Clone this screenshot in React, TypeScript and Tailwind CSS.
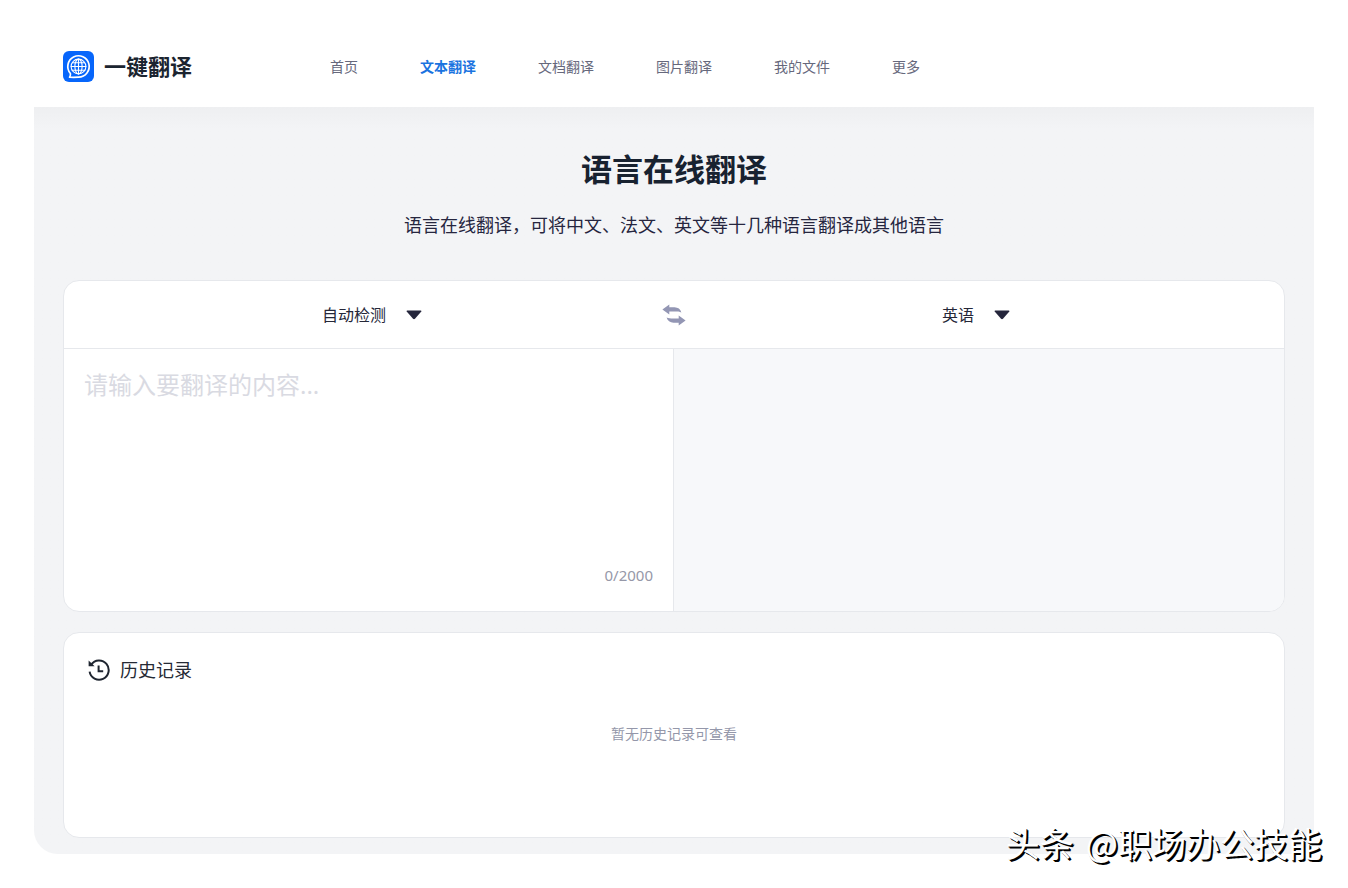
import React, { useState } from 'react';

const navItems = ['首页', '文本翻译', '文档翻译', '图片翻译', '我的文件', '更多'];
const languages = ['英语', '中文', '法语', '日语', '韩语', '德语', '俄语', '西班牙语'];
const MAX_LENGTH = 2000;

const LogoIcon: React.FC = () => (
  <svg width="31" height="31" viewBox="0 0 31 31" fill="none" aria-hidden="true">
    <rect width="31" height="31" rx="6" fill="#0766fb" />
    <g stroke="#fff" strokeLinecap="round" strokeLinejoin="round">
      <path
        d="M7.4 22.5A10.7 10.7 0 1 1 15.6 26.2C12.8 26.3 9.9 26.4 6.6 26.2C7.4 25 7.7 23.9 7.4 22.5Z"
        strokeWidth="1.7"
      />
      <g strokeWidth="1.1">
        <circle cx="15.5" cy="15.5" r="7.4" />
        <ellipse cx="15.5" cy="15.5" rx="3.6" ry="7.4" />
        <path d="M15.5 8.1V22.9M8.1 15.5H22.9M9.3 11.8H21.7M9.3 19.2H21.7" />
      </g>
    </g>
  </svg>
);

const SwapIcon: React.FC = () => (
  <svg width="24" height="22" viewBox="0 0 24 22" fill="#9396b4" aria-hidden="true">
    <path d="M0.4 5.6L7.3 0.6V3.3H12.5C16 3.5 18.4 5 19.4 8.5C17.6 7.6 15.5 7.6 13 7.6H7.3V10.6Z" />
    <path d="M23.6 16.4L16.7 21.4V18.7H11.5C8 18.5 5.6 17 4.6 13.5C6.4 14.4 8.5 14.4 11 14.4H16.7V11.4Z" />
  </svg>
);

const HistoryIcon: React.FC = () => (
  <svg width="22" height="22" viewBox="0 0 22 22" fill="none" stroke="#1f2530" strokeWidth="2" aria-hidden="true">
    <path d="M1.6 12.6A9.6 9.6 0 1 0 3.2 5.6" />
    <path d="M10.6 6.6V12.2H15.2" />
    <path d="M0.6 1.4V7.2H6.6Z" fill="#1f2530" stroke="none" />
  </svg>
);

interface LanguageSelectProps {
  label: string;
  value: string;
  options: string[];
  onChange: (value: string) => void;
}

const LanguageSelect: React.FC<LanguageSelectProps> = ({ label, value, options, onChange }) => (
  <div className="flex flex-1 justify-center">
    <div className="relative flex items-center">
      <select
        aria-label={label}
        value={value}
        onChange={e => onChange(e.target.value)}
        className="field-sizing-content cursor-pointer appearance-none bg-transparent pr-9 text-base leading-6 text-[#252738] outline-none"
      >
        {options.map(option => (
          <option key={option}>{option}</option>
        ))}
      </select>
      <svg className="pointer-events-none absolute right-0" width="16" height="10" viewBox="0 0 16 10" aria-hidden="true">
        <path d="M1.2 0.4H14.8Q16 0.6 15.3 1.6L9 8.8Q8 9.7 7 8.8L0.7 1.6Q0 0.6 1.2 0.4Z" fill="#25263c" />
      </svg>
    </div>
  </div>
);

const App: React.FC = () => {
  const [source, setSource] = useState('自动检测');
  const [target, setTarget] = useState('英语');
  const [text, setText] = useState('');

  const handleSwap = () => {
    if (source === '自动检测') return;
    setSource(target);
    setTarget(source);
  };

  return (
    <div className="relative bg-white px-[34px] pb-[34px] font-['Noto_Sans','Noto_Sans_CJK_SC',sans-serif]">
      <header className="flex items-center px-[29px] pt-[51px] pb-[25px]">
        <a href="#" className="flex items-center gap-[10px]">
          <LogoIcon />
          <span className="text-[22px] leading-[31px] font-bold text-[#1b2430]">一键翻译</span>
        </a>
        <nav className="ml-[138px] flex gap-[62px] text-sm">
          {navItems.map(item => (
            <a
              key={item}
              href="#"
              className={item === '文本翻译' ? 'font-bold text-[#1a73e0]' : 'text-[#66687c]'}
            >
              {item}
            </a>
          ))}
        </nav>
      </header>

      <main className="rounded-b-3xl bg-[#f3f4f6] bg-linear-to-b from-[#eeeff1] to-[#f3f4f6] to-[22px] px-[29px] pb-4">
        <div className="pt-10 text-center">
          <h1 className="text-[31px] leading-[44px] font-bold text-[#182230]">语言在线翻译</h1>
          <p className="mt-5 text-lg text-[#26263f]">
            语言在线翻译，可将中文、法文、英文等十几种语言翻译成其他语言
          </p>
        </div>

        <section className="mt-[41px] overflow-hidden rounded-2xl border border-[#e6e8ec] bg-white">
          <div className="flex h-[68px] items-center border-b border-[#e6e8ec] px-[18px]">
            <LanguageSelect
              label="源语言"
              value={source}
              options={['自动检测', ...languages]}
              onChange={setSource}
            />
            <button type="button" aria-label="交换语言" onClick={handleSwap} className="cursor-pointer">
              <SwapIcon />
            </button>
            <LanguageSelect label="目标语言" value={target} options={languages} onChange={setTarget} />
          </div>
          <div className="grid grid-cols-2">
            <div className="flex flex-col border-r border-[#e6e8ec] px-5 pt-5 pb-6">
              <textarea
                aria-label="原文"
                value={text}
                maxLength={MAX_LENGTH}
                onChange={e => setText(e.target.value)}
                placeholder="请输入要翻译的内容..."
                className="h-[194px] resize-none text-2xl text-[#252738] outline-none placeholder:text-[#d9dae2]"
              />
              <span className="text-right text-[15px] leading-6 text-[#9698a8]">
                {text.length}/{MAX_LENGTH}
              </span>
            </div>
            <div className="bg-[#f7f8fa]" />
          </div>
        </section>

        <section className="mt-5 min-h-[206px] rounded-2xl border border-[#e6e8ec] bg-white px-6 pt-[23px]">
          <h2 className="flex items-center gap-[10px] text-lg text-[#252a35]">
            <HistoryIcon />
            历史记录
          </h2>
          <p className="mt-10 text-center text-sm text-[#9497aa]">暂无历史记录可查看</p>
        </section>
      </main>

      <div className="pointer-events-none absolute right-[26px] bottom-[20px] flex gap-3 font-['Noto_Sans_CJK_SC',sans-serif] text-[34px] leading-[50px] text-white [text-shadow:1px_1px_0_#000,2px_2px_0_#000]">
        <span>头条</span>
        <span>@职场办公技能</span>
      </div>
    </div>
  );
};

export default App;
